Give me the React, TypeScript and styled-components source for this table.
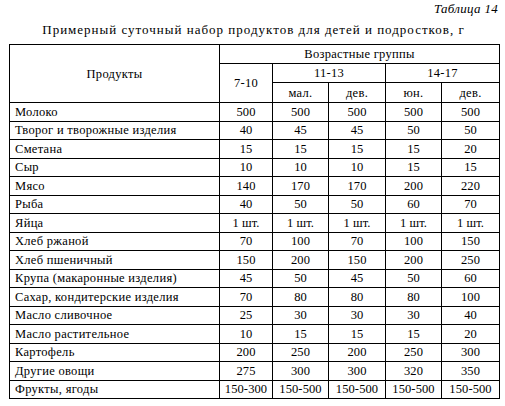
import React from "react";
import styled, { createGlobalStyle } from "styled-components";

const GlobalStyle = createGlobalStyle`
    html, body {
        margin: 0;
        padding: 0;
        background: #ffffff;
    }
    body {
        font-family: "Liberation Serif", "Times New Roman", serif;
        color: #000000;
    }
`;

const Page = styled.div`
    width: 505px;
    height: 406px;
    padding: 1px 7px 0 9px;
    box-sizing: border-box;
    overflow: hidden;
`;

const TableNumber = styled.div`
    text-align: right;
    font-style: italic;
    font-size: 13px;
    line-height: 15px;
    letter-spacing: 0.3px;
`;

const Title = styled.div`
    text-align: center;
    font-size: 13px;
    line-height: 15px;
    letter-spacing: 1px;
    margin-top: 6px;
    margin-bottom: 7px;
`;

const Table = styled.table`
    border-collapse: collapse;
    table-layout: fixed;
    width: 490px;
    font-size: 12.5px;
    border: 1px solid #000;
`;

const HeadCell = styled.th<{ $height?: number }>`
    border: 1px solid #000;
    font-weight: normal;
    text-align: center;
    padding: 0;
    height: ${(p) => p.$height ?? 18}px;
    line-height: 14px;
    letter-spacing: 0.3px;
`;

const NameCell = styled.td`
    border: 1px solid #000;
    padding: 0 0 0 5px;
    height: 17.5px;
    line-height: 14px;
    text-align: left;
    white-space: nowrap;
    letter-spacing: 0.3px;
`;

const Cell = styled.td`
    border: 1px solid #000;
    padding: 0;
    text-align: center;
    line-height: 14px;
    white-space: nowrap;
    letter-spacing: 0.1px;
`;

const rows: [string, string[]][] = [
    ["Молоко", ["500", "500", "500", "500", "500"]],
    ["Творог и творожные изделия", ["40", "45", "45", "50", "50"]],
    ["Сметана", ["15", "15", "15", "15", "20"]],
    ["Сыр", ["10", "10", "10", "15", "15"]],
    ["Мясо", ["140", "170", "170", "200", "220"]],
    ["Рыба", ["40", "50", "50", "60", "70"]],
    ["Яйца", ["1 шт.", "1 шт.", "1 шт.", "1 шт.", "1 шт."]],
    ["Хлеб ржаной", ["70", "100", "70", "100", "150"]],
    ["Хлеб пшеничный", ["150", "200", "150", "200", "250"]],
    ["Крупа (макаронные изделия)", ["45", "50", "45", "50", "60"]],
    ["Сахар, кондитерские изделия", ["70", "80", "80", "80", "100"]],
    ["Масло сливочное", ["25", "30", "30", "30", "40"]],
    ["Масло растительное", ["10", "15", "15", "15", "20"]],
    ["Картофель", ["200", "250", "200", "250", "300"]],
    ["Другие овощи", ["275", "300", "300", "320", "350"]],
    ["Фрукты, ягоды", ["150-300", "150-500", "150-500", "150-500", "150-500"]],
];

const App: React.FC = () => {
    return (
        <>
            <GlobalStyle />
            <Page>
                <TableNumber>Таблица 14</TableNumber>
                <Title>Примерный суточный набор продуктов для детей и подростков, г</Title>
                <Table>
                    <colgroup>
                        <col style={{ width: 210 }} />
                        <col style={{ width: 53 }} />
                        <col style={{ width: 56 }} />
                        <col style={{ width: 57 }} />
                        <col style={{ width: 56 }} />
                        <col style={{ width: 58 }} />
                    </colgroup>
                    <thead>
                        <tr>
                            <HeadCell rowSpan={3}>Продукты</HeadCell>
                            <HeadCell colSpan={5} $height={18}>
                                Возрастные группы
                            </HeadCell>
                        </tr>
                        <tr>
                            <HeadCell rowSpan={2}>7-10</HeadCell>
                            <HeadCell colSpan={2} $height={18}>
                                11-13
                            </HeadCell>
                            <HeadCell colSpan={2} $height={18}>
                                14-17
                            </HeadCell>
                        </tr>
                        <tr>
                            <HeadCell $height={19}>мал.</HeadCell>
                            <HeadCell $height={19}>дев.</HeadCell>
                            <HeadCell $height={19}>юн.</HeadCell>
                            <HeadCell $height={19}>дев.</HeadCell>
                        </tr>
                    </thead>
                    <tbody>
                        {rows.map(([name, values]) => (
                            <tr key={name}>
                                <NameCell>{name}</NameCell>
                                {values.map((v, i) => (
                                    <Cell key={i}>{v}</Cell>
                                ))}
                            </tr>
                        ))}
                    </tbody>
                </Table>
            </Page>
        </>
    );
};

export default App;
